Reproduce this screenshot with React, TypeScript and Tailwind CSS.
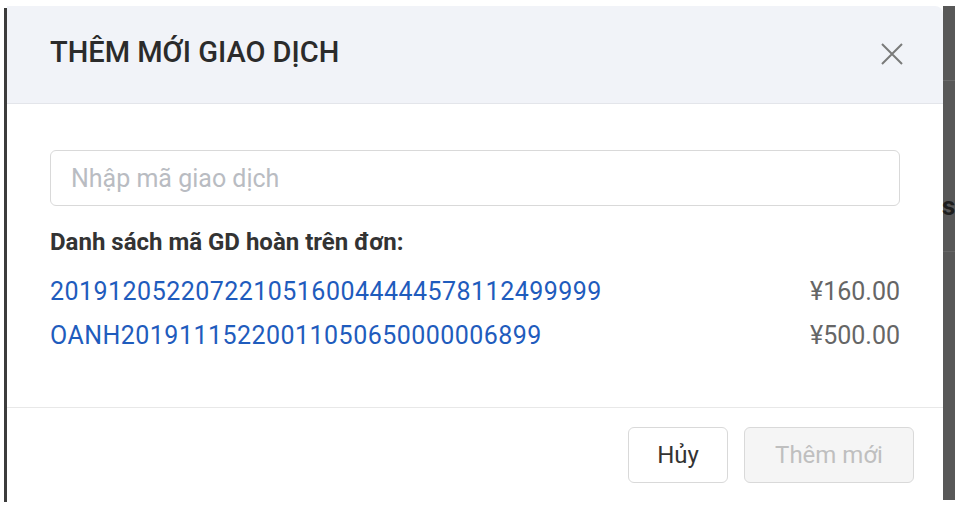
import { useState } from "react";

const refunds = [
  { code: "20191205220722105160044444578112499999", amount: "¥160.00" },
  { code: "OANH20191115220011050650000006899", amount: "¥500.00" },
];

function App() {
  const [code, setCode] = useState("");

  return (
    <div className="w-[955px] h-[506px] bg-white overflow-hidden font-['Roboto',sans-serif]">
      <div className="flex pt-[6px] h-full">
        {/* left backdrop edge */}
        <div className="w-[4px]" />
        <div className="w-[3px] mt-[2px] mb-[4px] bg-[#3c3c3c]" />

        {/* modal */}
        <div className="w-[936px] h-[494px] bg-white rounded-tr-[8px] rounded-br-[6px] flex flex-col">
          {/* header */}
          <div className="h-[98px] bg-[#f1f3f8] border-b border-[#e3e5ea] rounded-tr-[8px] flex items-center justify-between pl-[43px] pr-[38px]">
            <h2 className="text-[29px] font-medium text-[#2b2b2b] -mt-[4px]">
              THÊM MỚI GIAO DỊCH
            </h2>
            <button className="w-[26px] h-[26px] flex items-center justify-center text-[#7a7a7a] -mt-[2px]">
              <svg width="24" height="24" viewBox="0 0 24 24" fill="none" stroke="currentColor" strokeWidth="2">
                <path d="M2 2 L22 22 M22 2 L2 22" />
              </svg>
            </button>
          </div>

          {/* body */}
          <div className="px-[43px] pt-[46px] pb-[49px] border-b border-[#e8e8e8]">
            <input
              value={code}
              onChange={(e) => setCode(e.target.value)}
              placeholder="Nhập mã giao dịch"
              className="w-full h-[56px] rounded-[6px] border border-[#d9d9d9] px-[20px] text-[25px] text-[#333] placeholder:text-[#b9bcc2] outline-none"
            />
            <p className="mt-[21px] text-[24px] leading-[30px] font-bold text-[#333]">
              Danh sách mã GD hoàn trên đơn:
            </p>
            <div className="mt-[13px]">
              {refunds.map((r) => (
                <div key={r.code} className="flex justify-between items-center h-[44px] text-[25px]">
                  <span className="text-[#1f5cbd] tracking-[0.47px]">{r.code}</span>
                  <span className="text-[#666]">{r.amount}</span>
                </div>
              ))}
            </div>
          </div>

          {/* footer */}
          <div className="flex justify-end gap-[16px] pt-[19px] pr-[29px]">
            <button className="w-[100px] h-[56px] rounded-[6px] border border-[#d9d9d9] bg-white text-[24px] text-[#333]">
              Hủy
            </button>
            <button
              disabled
              className="w-[170px] h-[56px] rounded-[6px] border border-[#d9d9d9] bg-[#f5f5f5] text-[24px] text-[#bfbfbf]"
            >
              Thêm mới
            </button>
          </div>
        </div>

        {/* right backdrop strip */}
        <div className="w-[12px] h-[494px] bg-[#585858] flex flex-col">
          <div className="h-[74px]" />
          <div className="h-[1px] bg-[#6a6a6a]" />
          <div className="h-[110px]" />
          <span className="text-[26px] leading-[30px] font-bold text-[#1e1e1e] -ml-[1px]">s</span>
          <div className="h-[30px]" />
          <div className="h-[1px] bg-[#666]" />
        </div>
      </div>
    </div>
  );
}

export default App;
